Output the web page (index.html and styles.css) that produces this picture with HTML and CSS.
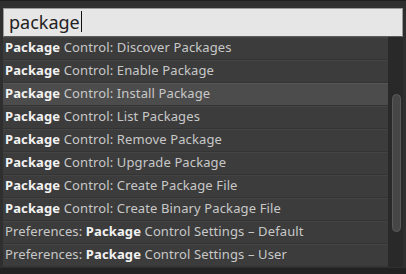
FILE: index.html
```html
<!DOCTYPE html>
<html lang="en">
<head>
    <meta charset="UTF-8">
    <title>Command Palette</title>
    <link rel="stylesheet" href="styles.css">
</head>
<body>

<div class="palette">
    <div class="search">
        <div class="search-input">package<span class="caret"></span></div>
    </div>
    <div class="results">
        <ul class="list">
            <li class="item"><b>Package</b> Control: Discover Packages</li>
            <li class="item"><b>Package</b> Control: Enable Package</li>
            <li class="item selected"><b>Package</b> Control: Install Package</li>
            <li class="item"><b>Package</b> Control: List Packages</li>
            <li class="item"><b>Package</b> Control: Remove Package</li>
            <li class="item"><b>Package</b> Control: Upgrade Package</li>
            <li class="item"><b>Package</b> Control: Create Package File</li>
            <li class="item"><b>Package</b> Control: Create Binary Package File</li>
            <li class="item">Preferences: <b>Package</b> Control Settings &ndash; Default</li>
            <li class="item">Preferences: <b>Package</b> Control Settings &ndash; User</li>
        </ul>
        <div class="scrollbar">
            <div class="thumb"></div>
        </div>
    </div>
</div>

</body>
</html>
```
FILE: styles.css
```css
body {
    margin: 0;
    background-color: #222;
    font-family: "Noto Sans", "Open Sans", sans-serif;
}
.palette {
    width: 406px;
    height: 274px;
    box-sizing: border-box;
    padding: 2px 3px 0 3px;
    background-color: #2f2f2f;
    border-top: 1px solid #1e1e1e;
    border-bottom: 6px solid #222;
}
.search {
    padding-top: 5px;
}
.search-input {
    display: flex;
    align-items: center;
    height: 29px;
    box-sizing: border-box;
    padding: 0 0 2px 5px;
    border: 1px solid #9a9a9a;
    border-bottom-color: #5a5a5a;
    background-color: #e6e6e6;
    color: #222;
    font-size: 18px;
}
.caret {
    display: inline-block;
    width: 1px;
    height: 21px;
    margin-left: 1px;
    background-color: #111;
}
.results {
    display: flex;
    height: 230px;
}
.list {
    flex: 1;
    margin: 0;
    padding: 0;
    list-style: none;
}
.item {
    height: 23px;
    box-sizing: border-box;
    padding-left: 2px;
    line-height: 19px;
    font-size: 13px;
    letter-spacing: 0.12px;
    color: #c8c8c8;
    background-color: #3c3c3c;
    border-bottom: 1px solid #343434;
    border-top: 1px solid #444;
    white-space: nowrap;
}
.item b {
    color: #f2f2f2;
}
.item.selected {
    background-color: #4c4c4c;
    border-top-color: #555;
}
.scrollbar {
    width: 15px;
    background-color: #292929;
    padding-top: 57px;
}
.thumb {
    width: 9px;
    height: 138px;
    margin-left: 4px;
    box-sizing: border-box;
    border: 1px solid #5a5a5a;
    border-radius: 5px;
    background-color: #464646;
}
```
